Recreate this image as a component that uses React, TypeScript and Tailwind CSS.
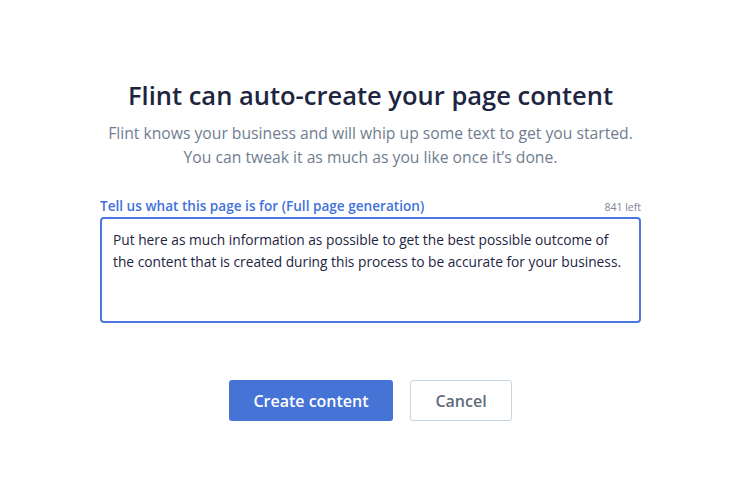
import React, { useState } from 'react'

export default function App() {
  const [text, setText] = useState(
    'Put here as much information as possible to get the best possible outcome of the content that is created during this process to be accurate for your business.'
  )

  return (
    <div className="w-[741px] h-[498px] bg-white flex flex-col items-center font-['Open_Sans',sans-serif]">
      <h1 className="mt-[78px] text-[25.5px] leading-[34px] font-semibold text-[#1d2541]">
        Flint can auto-create your page content
      </h1>
      <p className="mt-[9px] text-[15.7px] leading-[24px] text-[#6f7d8f] text-center">
        Flint knows your business and will whip up some text to get you started.
        <br />
        You can tweak it as much as you like once it’s done.
      </p>

      <div className="mt-[28px] w-[541px] flex flex-col">
        <div className="flex items-end justify-between">
          <label className="text-[13.6px] leading-[18px] font-semibold text-[#3f72dc]">
            Tell us what this page is for (Full page generation)
          </label>
          <span className="text-[10.5px] leading-[16px] text-[#7b8594]">841 left</span>
        </div>
        <textarea
          value={text}
          onChange={e => setText(e.target.value)}
          className="mt-[2px] h-[106px] w-full resize-none rounded-[4px] border-2 border-[#4a78e0] pl-[11px] pr-[6px] py-[10px] text-[13.75px] leading-[22px] text-[#1d2541] outline-none"
        />
      </div>

      <div className="mt-[57px] flex gap-[17px]">
        <button className="w-[164px] h-[41px] rounded-[3px] bg-[#4673d6] text-white text-[16px] font-semibold">
          Create content
        </button>
        <button className="w-[102px] h-[41px] rounded-[3px] border border-[#c5d3de] bg-white text-[#5f6c7b] text-[16px] font-semibold">
          Cancel
        </button>
      </div>
    </div>
  )
}
